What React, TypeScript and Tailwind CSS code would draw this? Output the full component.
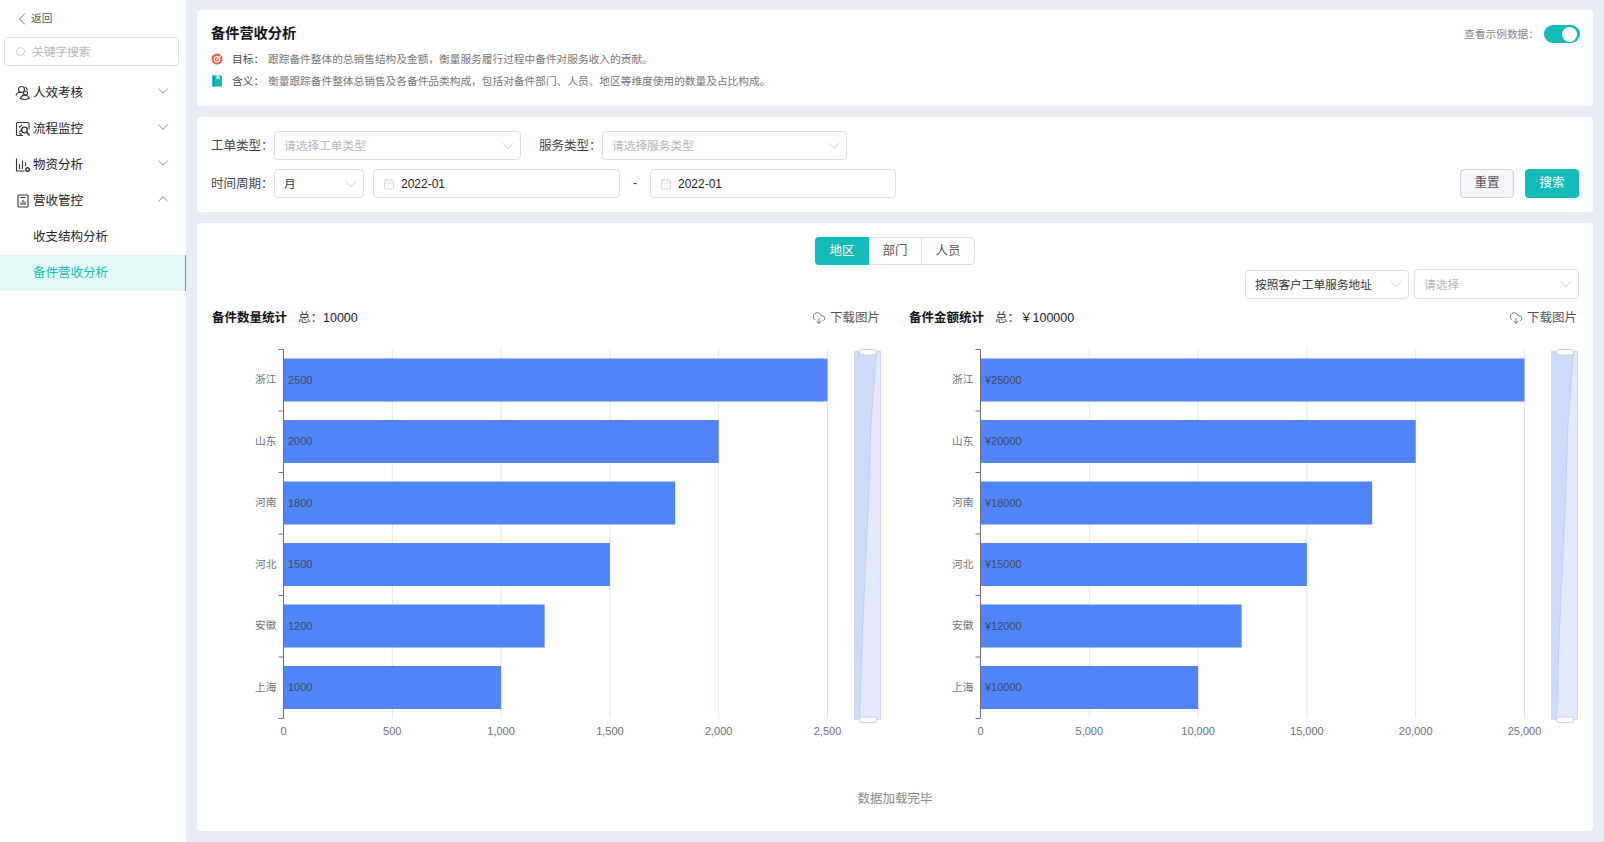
import * as React from 'react'
import { Calendar, ChevronDown, ChevronLeft, ChevronUp, CloudDownload, Search } from 'lucide-react'

const FONT = '"Liberation Sans", "Noto Sans CJK SC", sans-serif'

const regions = ['浙江', '山东', '河南', '河北', '安徽', '上海']
const qty = [2500, 2000, 1800, 1500, 1200, 1000]

function PeopleIcon() {
  return (
    <svg viewBox="0 0 16 16" className="w-[16px] h-[16px] shrink-0" fill="none" stroke="#333" strokeWidth="1.1">
      <circle cx="6.5" cy="4.5" r="3" />
      <path d="M1 10.5c.6-2.2 2.4-3.2 4.4-3.2" />
      <path d="M9.5 2.2c1.9.3 3 1.6 2.7 3.3" />
      <circle cx="10.5" cy="8" r="2" />
      <path d="M5.5 13.5c.6-2.3 2.6-3.5 5-3.3 1.8.2 3.2 1.2 4 2.8-2 1.6-6 2-9 .5z" />
    </svg>
  )
}

function ProcessIcon() {
  return (
    <svg viewBox="0 0 16 16" className="w-[16px] h-[16px] shrink-0" fill="none" stroke="#333" strokeWidth="1.1">
      <path d="M8 14.5H2.5a1 1 0 0 1-1-1V2.5a1 1 0 0 1 1-1H13a1 1 0 0 1 1 1v6" />
      <circle cx="9.5" cy="9" r="2.8" strokeWidth="1.3" />
      <path d="M11.5 11l3 3.5" strokeWidth="1.5" />
      <path d="M4 11.5l2.500-3M4 6.5l3-2.500M4 13h3" />
    </svg>
  )
}

function StockIcon() {
  return (
    <svg viewBox="0 0 16 16" className="w-[16px] h-[16px] shrink-0" fill="none" stroke="#333" strokeWidth="1.1">
      <path d="M1.5 1.5V14h8" />
      <path d="M4.5 12V7M7.5 12V3.500M10.5 9V5.500" />
      <circle cx="12.5" cy="12.5" r="1.8" strokeWidth="1.4" />
    </svg>
  )
}

function RevenueIcon() {
  return (
    <svg viewBox="0 0 16 16" className="w-[16px] h-[16px] shrink-0" fill="none" stroke="#333" strokeWidth="1.1">
      <rect x="3" y="2" width="10" height="12" rx=".8" />
      <path d="M5.5 4.5h5M6 12V9.500M8 12V7M10 12V8.500" />
    </svg>
  )
}

function GoalIcon() {
  return (
    <svg viewBox="0 0 12 12" className="w-[12px] h-[12px] shrink-0">
      <circle cx="6" cy="6" r="5.5" fill="#f4603d" />
      <circle cx="6" cy="6.3" r="2.7" fill="none" stroke="#fff" strokeWidth="1.2" />
      <circle cx="6" cy="6.3" r=".9" fill="#fff" />
      <path d="M6.5 5.8L10 2.500" stroke="#fff" strokeWidth="1" />
    </svg>
  )
}

function BookIcon() {
  return (
    <svg viewBox="0 0 12 12" className="w-[12px] h-[12px] shrink-0">
      <rect x="1.5" y=".5" width="9.5" height="11" rx=".6" fill="#13bcb8" />
      <rect x="1.5" y=".5" width="2" height="11" fill="#0c9c98" />
      <path d="M5.5 .5h3v4l-1.500-1-1.500 1z" fill="#bff0ee" />
    </svg>
  )
}

function MenuRow({ icon, label, open }: { icon: React.ReactNode; label: string; open?: boolean }) {
  return (
    <div className="h-[36px] flex items-center pl-[15px] pr-[14px] text-[12.5px] text-[#222]">
      {icon}
      <span className="ml-[2px] flex-1">{label}</span>
      {open ? (
        <ChevronUp className="w-[18px] h-[18px] -mt-[4px] text-[#666]" strokeWidth={1} />
      ) : (
        <ChevronDown className="w-[18px] h-[18px] -mt-[4px] text-[#666]" strokeWidth={1} />
      )}
    </div>
  )
}

function SelectBox({ text, placeholder, className }: { text: string; placeholder?: boolean; className: string }) {
  return (
    <div className={`h-[29px] flex items-center pl-[9px] pr-[2px] bg-white border border-[#dcdfe6] rounded-[4px] text-[11.7px] ${className}`}>
      <span className={`flex-1 pt-px ${placeholder ? 'text-[#b5b8bf]' : 'text-[#333]'}`}>{text}</span>
      <ChevronDown className="w-[20px] h-[20px] text-[#c0c4cc]" strokeWidth={1} />
    </div>
  )
}

function DateBox({ value, className }: { value: string; className: string }) {
  return (
    <div className={`h-[29px] flex items-center pl-[9px] bg-white border border-[#dcdfe6] rounded-[4px] text-[12px] text-[#222] ${className}`}>
      <Calendar className="w-[12px] h-[12px] text-[#b4b8c0] mr-[6px]" strokeWidth={1} />
      {value}
    </div>
  )
}

function Chart({ values, prefix, ticks }: { values: number[]; prefix: string; ticks: string[] }) {
  const x0 = 71.5
  const plotW = 544
  const top = 9
  const pitch = 61.5
  const max = Math.max(...values)
  const min = Math.min(...values)
  const bottom = top + pitch * 6
  // dataZoom 缩略图里的折线
  const points = values
    .map((v, i) => `${647.5 + ((v - min) / (max - min)) * 17},${12 + i * 73.6}`)
    .join(' ')
  return (
    <svg width="673" height="402" className="block" style={{ fontFamily: FONT }}>
      {ticks.map((_, i) =>
        i === 0 ? null : (
          <line
            key={i}
            x1={x0 + (plotW / 5) * i}
            x2={x0 + (plotW / 5) * i}
            y1={top}
            y2={bottom}
            stroke="#e0e6f1"
          />
        ),
      )}
      {values.map((v, i) => (
        <g key={i}>
          <rect x={x0} y={top + 9.5 + pitch * i} width={(v / max) * plotW} height={43} fill="#5184f8" />
          <text x={x0 + 4.5} y={top + 34.5 + pitch * i} fontSize="11" fill="#3d4a66">
            {prefix + v}
          </text>
          <text x={x0 - 7} y={top + 34 + pitch * i} fontSize="10.7" fill="#6e7079" textAnchor="end">
            {regions[i]}
          </text>
        </g>
      ))}
      <line x1={x0} x2={x0} y1={top} y2={bottom} stroke="#6e7079" />
      {Array.from({ length: 7 }).map((_, i) => (
        <line key={i} x1={x0 - 5} x2={x0} y1={top + pitch * i + 0.5} y2={top + pitch * i + 0.5} stroke="#6e7079" />
      ))}
      {ticks.map((t, i) => (
        <text key={t} x={x0 + (plotW / 5) * i} y={395} fontSize="11" fill="#6e7079" textAnchor="middle">
          {t}
        </text>
      ))}
      {/* dataZoom */}
      <rect x="642.5" y="11.5" width="26" height="368" fill="#e2e9fc" stroke="#d2dbee" />
      <polygon points={`643,12 ${points} 643,380`} fill="#cfdcf9" />
      <polyline points={points} fill="none" stroke="#bcd0fb" />
      <rect x="647.5" y="9.5" width="17" height="5.5" rx="2" fill="#fff" stroke="#c4cfe6" />
      <rect x="647.5" y="377" width="17" height="5.5" rx="2" fill="#fff" stroke="#c4cfe6" />
    </svg>
  )
}

function ChartPanel({ title, total, children }: { title: string; total: string; children: React.ReactNode }) {
  return (
    <div className="w-[673px]">
      <div className="flex items-center h-[20px] text-[12.5px]">
        <span className="font-bold text-[#111] w-[86px]">{title}</span>
        <span className="text-[#444] w-[25px]">总：</span>
        <span className="text-[#222]">{total}</span>
        <span className="ml-auto mr-[5px] flex items-center text-[#555]">
          <CloudDownload className="w-[14px] h-[14px] mr-[4px]" strokeWidth={1.3} />
          下载图片
        </span>
      </div>
      <div className="mt-[12px]">{children}</div>
    </div>
  )
}

export default function App() {
  return (
    <div
      className="w-[1604px] h-[842px] flex overflow-hidden bg-[#e8ecf4]"
      style={{ fontFamily: FONT }}
    >
      {/* 侧边栏 */}
      <aside className="w-[186px] shrink-0 bg-white">
        <div className="h-[37px] flex items-center pl-[12px] text-[10.7px] text-[#555]">
          <ChevronLeft className="w-[20px] h-[20px] -mr-[1px]" strokeWidth={1} />
          返回
        </div>
        <div className="ml-[4px] mr-[7px] h-[29px] flex items-center pl-[10px] border border-[#dcdfe6] rounded-[4px] text-[11.7px] text-[#b5b8bf]">
          <Search className="w-[12px] h-[12px] mr-[5px]" strokeWidth={1.2} />
          <span className="pt-px">关键字搜索</span>
        </div>
        <div className="mt-[9px]">
          <MenuRow icon={<PeopleIcon />} label="人效考核" />
          <MenuRow icon={<ProcessIcon />} label="流程监控" />
          <MenuRow icon={<StockIcon />} label="物资分析" />
          <MenuRow icon={<RevenueIcon />} label="营收管控" open />
          <div className="h-[36px] flex items-center pl-[33px] text-[12.5px] text-[#222]">收支结构分析</div>
          <div className="h-[36px] flex items-center pl-[33px] text-[12.5px] text-[#13bcb8] bg-[#e3fbf8] border-r border-[#13bcb8]">备件营收分析</div>
        </div>
      </aside>

      {/* 内容区 */}
      <main className="flex-1 min-w-0 pt-[10px] px-[11px] flex flex-col">
        <section className="h-[96px] bg-white rounded-[4px] pl-[14px] pr-[13px] pt-[14px] relative">
          <h1 className="text-[14.2px] leading-[18px] font-bold text-[#111]">备件营收分析</h1>
          <div className="mt-[8px] flex items-center h-[18px] text-[10.7px] text-[#777]">
            <GoalIcon />
            <span className="ml-[9px] w-[36px] shrink-0 whitespace-nowrap text-[#444]">目标：</span>
            <span>跟踪备件整体的总销售结构及金额，衡量服务履行过程中备件对服务收入的贡献。</span>
          </div>
          <div className="mt-[4px] flex items-center h-[18px] text-[10.7px] text-[#777]">
            <BookIcon />
            <span className="ml-[9px] w-[36px] shrink-0 whitespace-nowrap text-[#444]">含义：</span>
            <span>衡量跟踪备件整体总销售及各备件品类构成，包括对备件部门、人员、地区等维度使用的数量及占比构成。</span>
          </div>
          <div className="absolute right-[13px] top-[15px] flex items-center text-[10.7px] text-[#888]">
            <span className="mr-[5px]">查看示例数据：</span>
            <span className="w-[36px] h-[18px] rounded-full bg-[#13bcb8] flex items-center justify-end pr-[3px]">
              <span className="w-[15px] h-[15px] rounded-full bg-white" />
            </span>
          </div>
        </section>

        <section className="mt-[11px] h-[95px] bg-white rounded-[4px] px-[14px] pt-[14px] flex flex-col gap-[9px]">
          <div className="flex items-center text-[12.5px] text-[#444]">
            <span className="w-[63px] shrink-0 pt-px">工单类型：</span>
            <SelectBox text="请选择工单类型" placeholder className="w-[247px]" />
            <span className="ml-[18px] w-[63px] shrink-0 pt-px">服务类型：</span>
            <SelectBox text="请选择服务类型" placeholder className="w-[245px]" />
          </div>
          <div className="flex items-center text-[12.5px] text-[#444]">
            <span className="w-[63px] shrink-0 pt-px">时间周期：</span>
            <SelectBox text="月" className="w-[90px]" />
            <DateBox value="2022-01" className="ml-[9px] w-[247px]" />
            <span className="w-[30px] text-center text-[#333]">-</span>
            <DateBox value="2022-01" className="w-[246px]" />
            <button type="button" className="ml-auto w-[54px] h-[29px] rounded-[4px] border border-[#c9d2de] bg-[#f4f6f9] text-[12.5px] text-[#555]">重置</button>
            <button type="button" className="ml-[11px] w-[54px] h-[29px] rounded-[4px] bg-[#13bcb8] text-[12.5px] text-white">搜索</button>
          </div>
        </section>

        <section className="mt-[11px] h-[608px] bg-white rounded-[4px] pl-[15px] pr-[11px] pt-[14px]">
          <div className="flex justify-center pr-[4px] text-[12.5px]">
            <div className="flex h-[28px] w-[160px] rounded-[4px] border border-[#dcdfe6] text-[#555]">
              <span className="w-[54px] -my-px -ml-px flex items-center justify-center rounded-l-[4px] bg-[#13bcb8] text-white">地区</span>
              <span className="w-[53px] flex items-center justify-center border-r border-[#dcdfe6]">部门</span>
              <span className="flex-1 flex items-center justify-center">人员</span>
            </div>
          </div>
          <div className="mt-[4px] mr-[3px] flex justify-end items-center gap-[5px]">
            <SelectBox text="按照客户工单服务地址" className="w-[164px]" />
            <SelectBox text="请选择" placeholder className="w-[165px] !h-[30px]" />
          </div>
          <div className="mt-[9px] flex justify-between">
            <ChartPanel title="备件数量统计" total="10000">
              <Chart values={qty} prefix="" ticks={['0', '500', '1,000', '1,500', '2,000', '2,500']} />
            </ChartPanel>
            <ChartPanel title="备件金额统计" total="￥100000">
              <Chart values={qty.map((v) => v * 10)} prefix="¥" ticks={['0', '5,000', '10,000', '15,000', '20,000', '25,000']} />
            </ChartPanel>
          </div>
          <p className="mt-[48px] pr-[4px] text-center text-[12.5px] text-[#8a8a8a]">数据加载完毕</p>
        </section>
      </main>
    </div>
  )
}
